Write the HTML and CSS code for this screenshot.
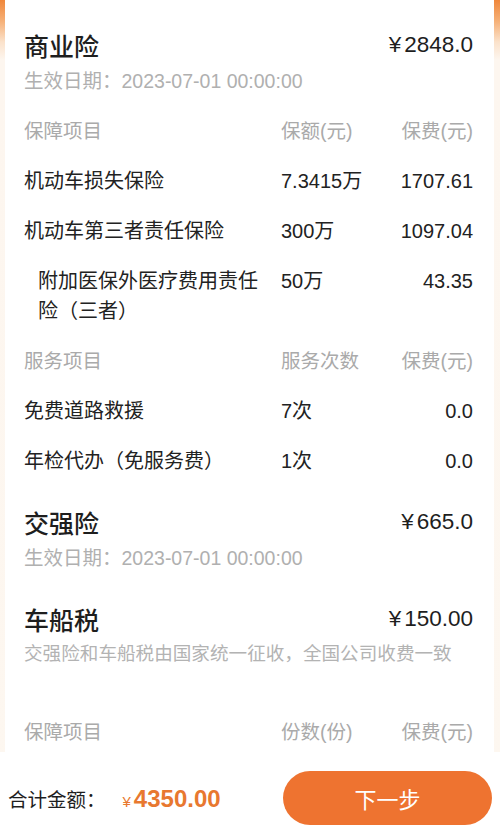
FILE: index.html
```html
<!DOCTYPE html>
<html lang="zh-CN">
<head>
<meta charset="utf-8">
<title>保单详情</title>
<link rel="stylesheet" href="styles.css">
</head>
<body>
<div class="page">
  <main class="scroll">
    <div class="card">
      <section class="block first">
        <div class="block-head">
          <span class="block-title">商业险</span>
          <span class="block-amount"><span class="yen">¥</span>2848.0</span>
        </div>
        <div class="block-sub">生效日期：2023-07-01 00:00:00</div>
      </section>

      <div class="table">
        <div class="row head">
          <span class="c1">保障项目</span>
          <span class="c2">保额(元)</span>
          <span class="c3">保费(元)</span>
        </div>
        <div class="row">
          <span class="c1">机动车损失保险</span>
          <span class="c2">7.3415万</span>
          <span class="c3">1707.61</span>
        </div>
        <div class="row">
          <span class="c1">机动车第三者责任保险</span>
          <span class="c2">300万</span>
          <span class="c3">1097.04</span>
        </div>
        <div class="row">
          <span class="c1 sub">附加医保外医疗费用责任险（三者）</span>
          <span class="c2">50万</span>
          <span class="c3">43.35</span>
        </div>
        <div class="row head">
          <span class="c1">服务项目</span>
          <span class="c2">服务次数</span>
          <span class="c3">保费(元)</span>
        </div>
        <div class="row">
          <span class="c1">免费道路救援</span>
          <span class="c2">7次</span>
          <span class="c3">0.0</span>
        </div>
        <div class="row">
          <span class="c1">年检代办（免服务费）</span>
          <span class="c2">1次</span>
          <span class="c3">0.0</span>
        </div>
      </div>

      <section class="block second">
        <div class="block-head">
          <span class="block-title">交强险</span>
          <span class="block-amount"><span class="yen">¥</span>665.0</span>
        </div>
        <div class="block-sub">生效日期：2023-07-01 00:00:00</div>
      </section>

      <section class="block third">
        <div class="block-head">
          <span class="block-title">车船税</span>
          <span class="block-amount"><span class="yen">¥</span>150.00</span>
        </div>
        <div class="block-note">交强险和车船税由国家统一征收，全国公司收费一致</div>
      </section>

      <div class="table last">
        <div class="row head">
          <span class="c1">保障项目</span>
          <span class="c2">份数(份)</span>
          <span class="c3">保费(元)</span>
        </div>
        <div class="row">
          <span class="c1">&nbsp;</span>
          <span class="c2"></span>
          <span class="c3"></span>
        </div>
      </div>
    </div>
  </main>

  <footer class="bar">
    <div class="total">
      <span class="total-label">合计金额：</span>
      <span class="total-yen">¥</span><span class="total-num">4350.00</span>
    </div>
    <button class="next" type="button">下一步</button>
  </footer>
</div>
</body>
</html>
```

FILE: styles.css
```css
* { box-sizing: border-box; }

html, body {
  margin: 0;
  padding: 0;
}

body {
  font-family: "Liberation Sans", "Noto Sans CJK SC", sans-serif;
  color: #222;
  background: #fdf7f0;
}

.page {
  height: 828px;
  display: flex;
  flex-direction: column;
  overflow: hidden;
  background: linear-gradient(to bottom, #f0873a 0px, #f6b27a 22px, #fbe2cb 42px, #fdf6ef 60px, #fdf7f0 100%);
}

.scroll {
  flex: 1;
  min-height: 0;
  overflow: hidden;
}

.card {
  margin: 0 6px 0 5px;
  padding: 28px 21px 0 19px;
  background: #fff;
  border-radius: 0 0 12px 12px;
  min-height: 100%;
}

.block-head {
  display: flex;
  justify-content: space-between;
  align-items: center;
  height: 34px;
}

.block-title {
  font-size: 25px;
  font-weight: 500;
  color: #1e1e1e;
}

.block-amount {
  font-size: 22.5px;
  color: #1e1e1e;
}

.yen {
  margin-right: 3px;
}

.block-sub {
  margin-top: 4px;
  font-size: 19.5px;
  line-height: 30px;
  color: #b0b0b0;
}

.block-note {
  margin-top: 3px;
  font-size: 18.6px;
  line-height: 30px;
  color: #b3b3b3;
}

.second { margin-top: 19px; }
.third { margin-top: 29px; }

.table {
  margin-top: 10px;
}

.table.last {
  margin-top: 38px;
}

.row {
  display: grid;
  grid-template-columns: minmax(0, 1fr) 100px 92px;
  padding: 10px 0;
  font-size: 20px;
  line-height: 30px;
  color: #222;
}

.row.head {
  color: #aaa;
  font-size: 19.5px;
}

.c1 {
  padding-right: 12px;
}

.c1.sub {
  padding-left: 14px;
}

.c3 {
  text-align: right;
}

.bar {
  flex: none;
  height: 76px;
  background: #fff;
  display: flex;
  align-items: center;
  justify-content: space-between;
  padding: 19px 8px 3px 8px;
}

.total {
  display: flex;
  align-items: baseline;
}

.total-label {
  font-size: 19.5px;
  color: #1e1e1e;
  margin-right: 17px;
}

.total-yen {
  font-size: 15px;
  color: #e8782f;
  margin-right: 3px;
}

.total-num {
  font-size: 24px;
  color: #e8782f;
  font-weight: 700;
}

.next {
  width: 209px;
  height: 54px;
  border: none;
  border-radius: 27px;
  background: #ee7330;
  color: #fff;
  font-family: "Liberation Sans", "Noto Sans CJK SC", sans-serif;
  font-size: 22px;
  padding: 0;
}
```
